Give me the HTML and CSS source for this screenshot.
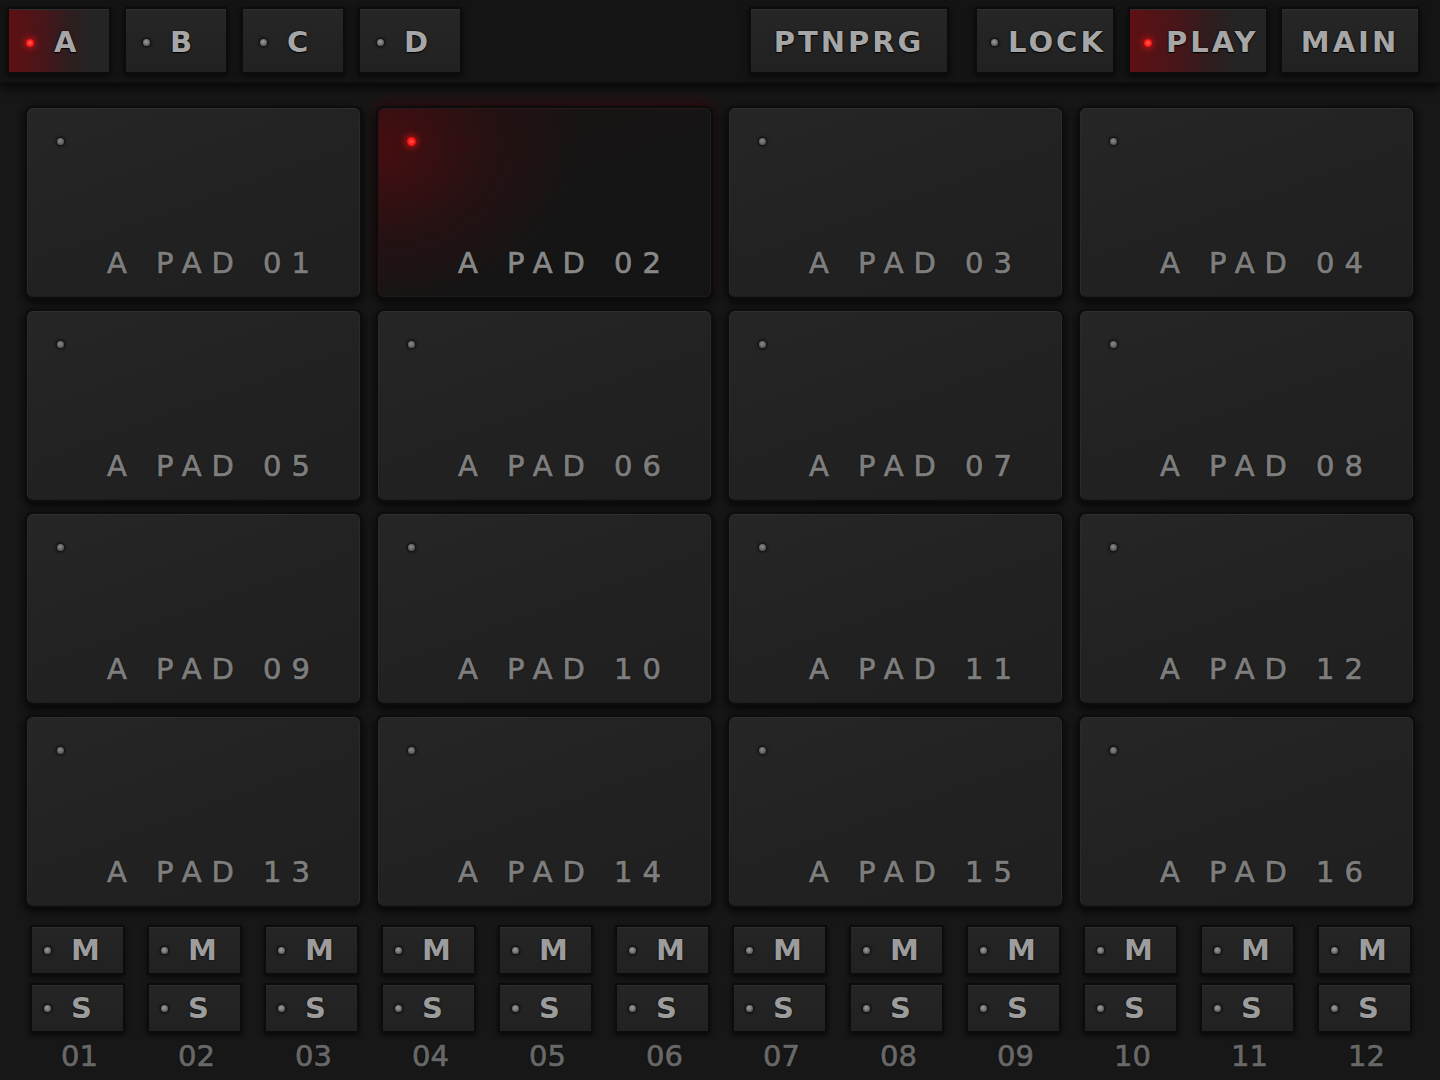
FILE: index.html
```html
<!DOCTYPE html>
<html>
<head>
<meta charset="utf-8">
<link rel="stylesheet" href="styles.css">
</head>
<body>
<div class="app">
  <header class="topbar">
    <div class="banks">
      <div class="btn bank on"><span class="led"></span><span class="lbl">A</span></div>
      <div class="btn bank"><span class="led"></span><span class="lbl">B</span></div>
      <div class="btn bank"><span class="led"></span><span class="lbl">C</span></div>
      <div class="btn bank"><span class="led"></span><span class="lbl">D</span></div>
    </div>
    <div class="modes">
      <div class="btn ptn">PTNPRG</div>
      <div class="btn mode lock"><span class="led"></span><span class="lbl">LOCK</span></div>
      <div class="btn mode play on"><span class="led"></span><span class="lbl">PLAY</span></div>
      <div class="btn main-btn">MAIN</div>
    </div>
  </header>

  <main class="pads">
    <div class="pad"><span class="pled"></span><span class="plbl">A PAD 01</span></div>
    <div class="pad hit"><span class="pled"></span><span class="plbl">A PAD 02</span></div>
    <div class="pad"><span class="pled"></span><span class="plbl">A PAD 03</span></div>
    <div class="pad"><span class="pled"></span><span class="plbl">A PAD 04</span></div>
    <div class="pad"><span class="pled"></span><span class="plbl">A PAD 05</span></div>
    <div class="pad"><span class="pled"></span><span class="plbl">A PAD 06</span></div>
    <div class="pad"><span class="pled"></span><span class="plbl">A PAD 07</span></div>
    <div class="pad"><span class="pled"></span><span class="plbl">A PAD 08</span></div>
    <div class="pad"><span class="pled"></span><span class="plbl">A PAD 09</span></div>
    <div class="pad"><span class="pled"></span><span class="plbl">A PAD 10</span></div>
    <div class="pad"><span class="pled"></span><span class="plbl">A PAD 11</span></div>
    <div class="pad"><span class="pled"></span><span class="plbl">A PAD 12</span></div>
    <div class="pad"><span class="pled"></span><span class="plbl">A PAD 13</span></div>
    <div class="pad"><span class="pled"></span><span class="plbl">A PAD 14</span></div>
    <div class="pad"><span class="pled"></span><span class="plbl">A PAD 15</span></div>
    <div class="pad"><span class="pled"></span><span class="plbl">A PAD 16</span></div>
  </main>

  <section class="mixer">
    <div class="ch"><div class="ms"><span class="led"></span><span class="lbl">M</span></div><div class="ms"><span class="led"></span><span class="lbl">S</span></div><div class="num">01</div></div>
    <div class="ch"><div class="ms"><span class="led"></span><span class="lbl">M</span></div><div class="ms"><span class="led"></span><span class="lbl">S</span></div><div class="num">02</div></div>
    <div class="ch"><div class="ms"><span class="led"></span><span class="lbl">M</span></div><div class="ms"><span class="led"></span><span class="lbl">S</span></div><div class="num">03</div></div>
    <div class="ch"><div class="ms"><span class="led"></span><span class="lbl">M</span></div><div class="ms"><span class="led"></span><span class="lbl">S</span></div><div class="num">04</div></div>
    <div class="ch"><div class="ms"><span class="led"></span><span class="lbl">M</span></div><div class="ms"><span class="led"></span><span class="lbl">S</span></div><div class="num">05</div></div>
    <div class="ch"><div class="ms"><span class="led"></span><span class="lbl">M</span></div><div class="ms"><span class="led"></span><span class="lbl">S</span></div><div class="num">06</div></div>
    <div class="ch"><div class="ms"><span class="led"></span><span class="lbl">M</span></div><div class="ms"><span class="led"></span><span class="lbl">S</span></div><div class="num">07</div></div>
    <div class="ch"><div class="ms"><span class="led"></span><span class="lbl">M</span></div><div class="ms"><span class="led"></span><span class="lbl">S</span></div><div class="num">08</div></div>
    <div class="ch"><div class="ms"><span class="led"></span><span class="lbl">M</span></div><div class="ms"><span class="led"></span><span class="lbl">S</span></div><div class="num">09</div></div>
    <div class="ch"><div class="ms"><span class="led"></span><span class="lbl">M</span></div><div class="ms"><span class="led"></span><span class="lbl">S</span></div><div class="num">10</div></div>
    <div class="ch"><div class="ms"><span class="led"></span><span class="lbl">M</span></div><div class="ms"><span class="led"></span><span class="lbl">S</span></div><div class="num">11</div></div>
    <div class="ch"><div class="ms"><span class="led"></span><span class="lbl">M</span></div><div class="ms"><span class="led"></span><span class="lbl">S</span></div><div class="num">12</div></div>
  </section>
</div>
</body>
</html>
```

FILE: styles.css
```css
* { box-sizing: border-box; }

html, body {
  margin: 0;
  padding: 0;
  background: #161616;
}

body {
  width: 1440px;
  height: 1080px;
  overflow: hidden;
  font-family: "DejaVu Sans", "Liberation Sans", sans-serif;
  font-weight: bold;
}

.app {
  width: 1440px;
  height: 1080px;
  background: #171717;
}

/* ---------- top bar ---------- */
.topbar {
  height: 84px;
  display: flex;
  align-items: flex-start;
  padding: 9px 22px 0 9px;
  background: #141414;
  box-shadow: 0 4px 10px rgba(0, 0, 0, 0.75);
  border-bottom: 2px solid #0e0e0e;
  position: relative;
}

.banks {
  display: flex;
  gap: 17px;
}

.modes {
  display: flex;
  margin-left: auto;
}

.btn {
  height: 63px;
  display: flex;
  align-items: center;
  background: linear-gradient(#262626, #212121);
  border-top: 1px solid #2e2e2e;
  box-shadow: 0 0 0 2px #0c0c0c, 0 2px 6px 2px rgba(0, 0, 0, 0.7);
  color: #a6a6a6;
  font-size: 29px;
  line-height: 29px;
  letter-spacing: 3px;
  text-shadow: 0 0 2px #000, 0 1px 1px #000;
  padding-top: 3px;
}

.bank {
  width: 100px;
  padding-left: 17px;
}

.bank .lbl { margin-left: 20px; }

.led {
  width: 7px;
  height: 7px;
  border-radius: 50%;
  background: radial-gradient(circle at 45% 40%, #a0a0a0, #6a6a6a 55%, #4a4a4a 100%);
  box-shadow: 0 0 3px 1px rgba(0, 0, 0, 0.8);
  flex: none;
}

.btn.on {
  background: linear-gradient(90deg, #5e1013 0%, #48161a 35%, #2e1d1e 60%, #242424 80%);
}

.btn.on .led {
  width: 8px;
  height: 8px;
  background: radial-gradient(circle, #ff6a5a 0%, #ff1a1a 55%, #d40000 100%);
  box-shadow: 0 0 6px 2px rgba(255, 20, 20, 0.55);
}

.ptn {
  width: 196px;
  justify-content: center;
  margin-right: 30px;
}

.mode {
  width: 136px;
}

.lock {
  padding-left: 14px;
  margin-right: 17px;
}
.lock .lbl { margin-left: 10px; }

.play {
  padding-left: 14px;
  margin-right: 16px;
}
.play .lbl { margin-left: 14px; }

.main-btn {
  width: 136px;
  justify-content: center;
}

/* ---------- pads ---------- */
.pads {
  display: grid;
  grid-template-columns: repeat(4, 333px);
  grid-auto-rows: 189px;
  column-gap: 18px;
  row-gap: 14px;
  padding: 24px 0 0 27px;
}

.pad {
  display: flex;
  flex-direction: column;
  justify-content: space-between;
  align-items: flex-start;
  padding: 29px 0 18px 29px;
  border-radius: 6px;
  background: linear-gradient(160deg, #262626 0%, #222222 45%, #1f1f1f 100%);
  border-top: 1px solid #2e2e2e;
  border-left: 1px solid #2a2a2a;
  border-right: 1px solid #2a2a2a;
  border-bottom: 1px solid #1c1c1c;
  box-shadow: 0 0 0 2px #0d0d0d, 0 3px 8px 3px rgba(0, 0, 0, 0.75);
}

.pled {
  width: 7px;
  height: 7px;
  border-radius: 50%;
  background: radial-gradient(circle at 45% 40%, #8c8c8c, #5c5c5c 60%, #404040 100%);
  box-shadow: 0 0 3px 1px rgba(0, 0, 0, 0.8);
}

.plbl {
  margin-left: 50px;
  color: #7e7e7e;
  font-weight: normal;
  font-size: 29px;
  line-height: 29px;
  letter-spacing: 10px;
  white-space: pre;
  -webkit-text-stroke: 0.7px #7e7e7e;
  text-shadow: 0 0 2px #000;
}

.pad.hit {
  background:
    radial-gradient(ellipse 75% 110% at 0% 20%, rgba(110, 8, 14, 0.55) 0%, rgba(70, 10, 14, 0.3) 45%, rgba(0, 0, 0, 0) 80%),
    linear-gradient(160deg, #191313 0%, #151515 60%, #141414 100%);
  border-top-color: #2a1a1b;
  border-left-color: #2c1416;
  border-right-color: #1f1f1f;
  box-shadow: 0 0 0 2px #0b0b0b, 0 -6px 14px 2px rgba(60, 6, 10, 0.5), 0 3px 8px 3px rgba(0, 0, 0, 0.75);
}

.pad.hit .pled {
  width: 9px;
  height: 9px;
  margin: -1px 0 0 -1px;
  background: radial-gradient(circle, #ff5a50 0%, #ff1414 55%, #d00000 100%);
  box-shadow: 0 0 6px 2px rgba(255, 20, 20, 0.6);
}

.pad.hit .plbl {
  color: #888888;
  -webkit-text-stroke-color: #888888;
}

/* ---------- mixer ---------- */
.mixer {
  display: grid;
  grid-template-columns: repeat(12, 91px);
  column-gap: 26px;
  padding: 21px 0 0 32px;
}

.ch {
  display: flex;
  flex-direction: column;
  align-items: stretch;
}

.ms {
  height: 46px;
  display: flex;
  align-items: center;
  padding-left: 12px;
  background: linear-gradient(#252525, #212121);
  border-top: 1px solid #2d2d2d;
  box-shadow: 0 0 0 2px #0c0c0c, 0 2px 5px 2px rgba(0, 0, 0, 0.7);
  color: #9c9c9c;
  font-size: 29px;
  line-height: 29px;
  text-shadow: 0 0 2px #000;
}

.ms + .ms { margin-top: 12px; }

.ms .lbl { margin-left: 20px; }

.num {
  margin-top: 11px;
  padding-left: 4px;
  text-align: center;
  color: #686868;
  font-weight: normal;
  font-size: 29px;
  line-height: 29px;
  letter-spacing: 0;
  -webkit-text-stroke: 0.7px #686868;
  text-shadow: 0 0 2px #000;
}
```
